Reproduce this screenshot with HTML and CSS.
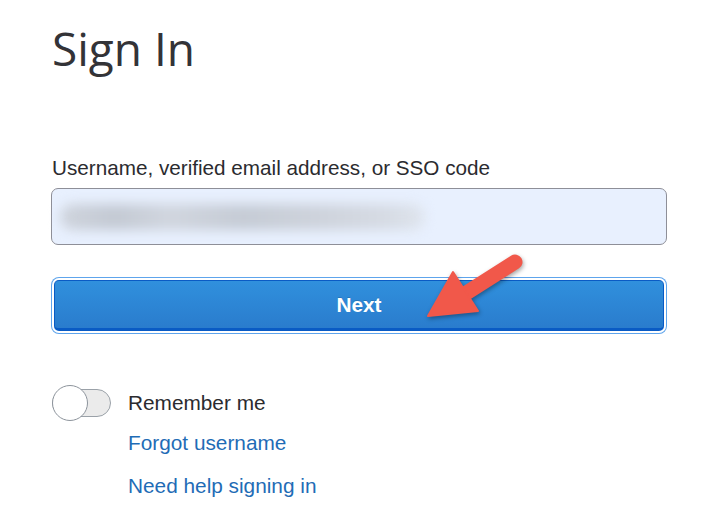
FILE: index.html
```html
<!DOCTYPE html>
<html lang="en">
<head>
<meta charset="utf-8">
<title>Sign In</title>
<link rel="stylesheet" href="styles.css">
</head>
<body>
<main class="signin">
  <h1 class="title">Sign In</h1>
  <label class="label" for="user">Username, verified email address, or SSO code</label>
  <div class="input" id="user">
    <span class="blur"></span>
  </div>
  <button class="next" type="button">Next</button>
  <div class="remember">
    <span class="toggle"><span class="knob"></span></span>
    <span class="remember-text">Remember me</span>
  </div>
  <ul class="links">
    <li><a href="#">Forgot username</a></li>
    <li><a href="#">Need help signing in</a></li>
  </ul>
  <svg class="arrow" width="120" height="90" viewBox="0 0 120 90" aria-hidden="true">
    <line x1="95" y1="23" x2="40" y2="58" stroke="#f1584a" stroke-width="15" stroke-linecap="round"/>
    <polygon points="8,77 33,33 58,72" fill="#f1584a" stroke="#f1584a" stroke-width="2" stroke-linejoin="round"/>
  </svg>
</main>
</body>
</html>
```
FILE: styles.css
```css
* { box-sizing: border-box; }
html, body { margin: 0; padding: 0; background: #fff; }
body { width: 720px; height: 518px; overflow: hidden; }

.signin {
  position: relative;
  display: flex;
  flex-direction: column;
  padding: 0 53px 0 51px;
  font-family: "Liberation Sans", Arial, sans-serif;
  color: #2b2b2f;
}

.title {
  margin: 20px 0 0 1px;
  font-family: "Open Sans", sans-serif;
  font-weight: 400;
  font-size: 46px;
  line-height: 56px;
  color: #333337;
}

.label {
  margin-top: 80px;
  margin-left: 1px;
  font-size: 20.7px;
  line-height: 24px;
}

.input {
  margin-top: 8px;
  height: 57px;
  border: 1px solid #8e8f98;
  border-radius: 7px;
  background: #e8f0fe;
  display: flex;
  align-items: center;
  padding-left: 8px;
}

.blur {
  width: 365px;
  height: 26px;
  border-radius: 13px;
  background: linear-gradient(90deg, #cfd4dd 0%, #c3c9d3 15%, #d0d5de 30%, #c5cbd5 50%, #cdd2db 70%, #d6dbe4 90%, #dfe5ee 100%);
  filter: blur(6px);
}

.next {
  margin: 35px 3px 0;
  height: 51px;
  border: 1px solid #0a5bc4;
  border-bottom-width: 3px;
  border-radius: 5px;
  background: linear-gradient(#3090dd, #2a7ccd);
  box-shadow: 0 0 0 2px #fff, 0 0 0 3px #5ea4ec;
  color: #fff;
  font-family: "Liberation Sans", Arial, sans-serif;
  font-weight: 700;
  font-size: 20.8px;
  text-shadow: 0 -1px 0 rgba(0,0,0,0.15);
  padding: 0;
}

.remember {
  margin-top: 58px;
  display: flex;
  align-items: center;
  gap: 17px;
  margin-left: 1px;
}

.toggle {
  position: relative;
  width: 59px;
  height: 28px;
  border: 1.5px solid #9aa1a8;
  border-radius: 14px;
  background: #ebebeb;
  display: flex;
  align-items: center;
}

.knob {
  width: 36px;
  height: 36px;
  margin-left: -1.5px;
  border: 1.5px solid #8d949c;
  border-radius: 50%;
  background: #fff;
}

.remember-text {
  font-size: 20.8px;
  line-height: 24px;
  color: #2b2b2f;
}

.links {
  list-style: none;
  margin: 14px 0 0 77px;
  padding: 0;
  display: flex;
  flex-direction: column;
  gap: 19px;
}

.links a {
  font-size: 20.8px;
  line-height: 24px;
  color: #1f6cb6;
  text-decoration: none;
}

.arrow {
  position: absolute;
  left: 420px;
  top: 239px;
  filter: drop-shadow(1px 2px 2px rgba(0,0,0,0.35));
}
```
